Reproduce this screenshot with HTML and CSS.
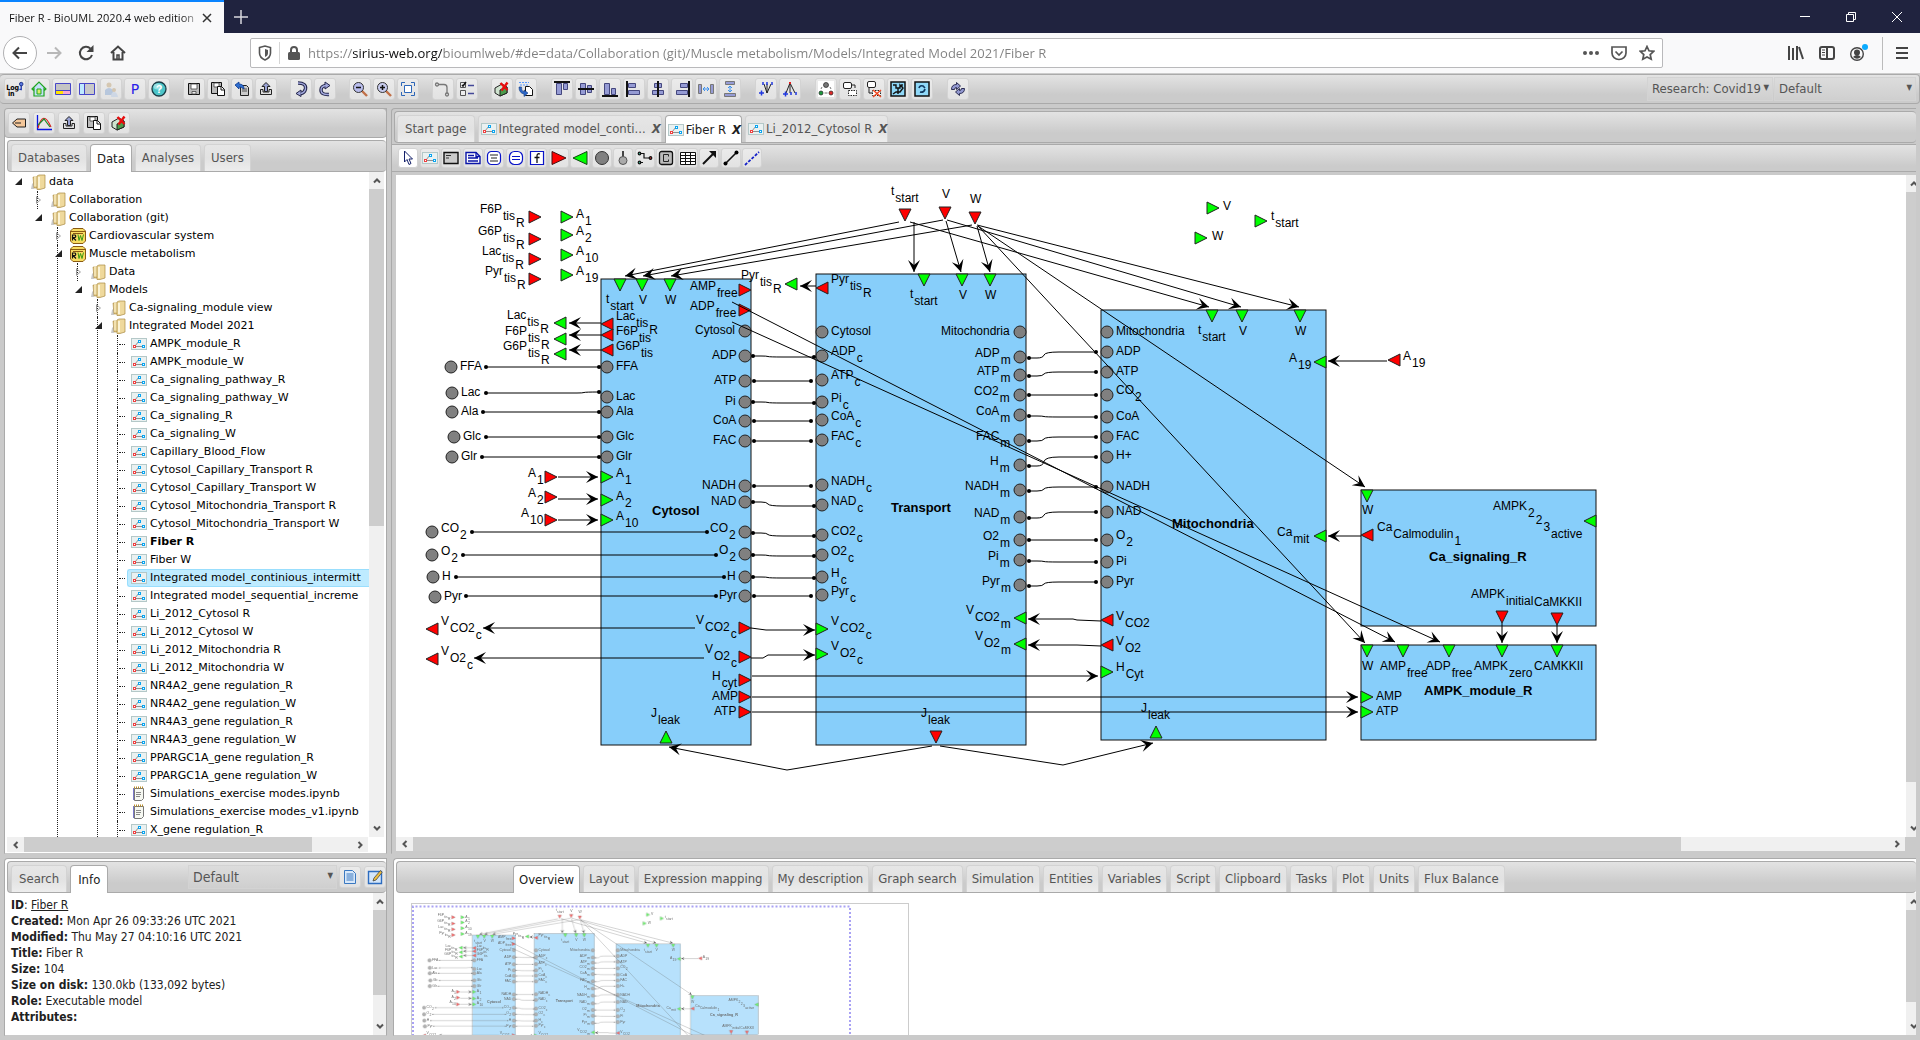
FILE: index.html
```html
<!DOCTYPE html>
<html lang="en">
<head>
<meta charset="utf-8">
<title>Fiber R - BioUML 2020.4 web edition</title>
<link rel="stylesheet" href="styles.css">
</head>
<body>
<svg class="defs" aria-hidden="true">
  <symbol id="i-folder" viewBox="0 0 16 16"><path d="M2 10l2-2v7H1z" fill="#c9c9c9"/><path d="M3 3h6v11H4z" fill="#dcc07a" stroke="#a98a44" stroke-width=".6"/><path d="M4 2.500h5v10H4z" fill="#f3e2b0"/><path d="M7 2l2-1h6v13l-5 1.500H7z" fill="#efd99c" stroke="#a98a44" stroke-width=".7"/><path d="M8 3h2v11H8z" fill="#fbf3d6"/></symbol>
  <symbol id="i-db" viewBox="0 0 16 16"><path d="M3 .5h10l2.500 2.500v10L13 15.500H3L.5 13V3z" fill="#f8dc62" stroke="#8a5a12"/><path d="M1 3.500h14M3 5.500h10" stroke="#8a5a12" fill="none"/><path d="M2.500 12.500V7H5q1.500 1 0 2.500H3l3 3" fill="none" stroke="#111" stroke-width="1.200"/><path d="M8 6.500l1 6 1.500-5 1.500 5 1.500-6" fill="none" stroke="#3a9a12"/></symbol>
  <symbol id="i-diag" viewBox="0 0 16 12"><rect x=".5" y=".5" width="15" height="11" fill="#eaf1f1" stroke="#b4c8c8"/><path d="M4 8L8 3M5 8.500h6" stroke="#777" stroke-width=".8" fill="none"/><rect x="2.500" y="7.500" width="2" height="2" fill="#fff" stroke="#f04040"/><rect x="7.500" y="2.500" width="2" height="2" fill="#fff" stroke="#0aa4f0"/><rect x="11.500" y="7.500" width="2" height="2" fill="#fff" stroke="#0aa4f0"/></symbol>
  <symbol id="i-note" viewBox="0 0 16 16"><path d="M3.500 2.500h9v10l-2 2h-7z" fill="#f6f8f2" stroke="#777"/><path d="M2.500 2v12" stroke="#7a78c8"/><path d="M3 1.500h10" stroke="#b98d28" stroke-width="2" stroke-dasharray="1 1"/><path d="M5 6.500h5M5 8.500h5M5 10.500h4" stroke="#888"/></symbol>
  <symbol id="i-save" viewBox="0 0 16 16"><path d="M2.500 2.500h11v11h-11z" fill="#bbb" stroke="#111"/><path d="M5 3h6v5H5z" fill="#fff" stroke="#444" stroke-width=".8"/><path d="M6 10.500h4V13H6z" fill="#eee" stroke="#444" stroke-width=".8"/></symbol>
  <symbol id="i-saveas" viewBox="0 0 16 16"><path d="M1.500 1.500h10v11h-10z" fill="#bbb" stroke="#111"/><path d="M4 2h5v4H4z" fill="#fff" stroke="#444" stroke-width=".8"/><path d="M7.500 5.500h4l3 3v6h-7z" fill="#fff" stroke="#111"/><path d="M11 5.500v3.500h3.500" fill="none" stroke="#111"/></symbol>
  <symbol id="i-export" viewBox="0 0 16 16"><path d="M8 1.500L4 5.500h2.500v5h3v-5H12z" fill="#9aa3d4" stroke="#222"/><path d="M2.500 8.500v5h11v-5H11v2.500H5V8.500z" fill="#ddd" stroke="#222"/></symbol>
  <symbol id="i-cube" viewBox="0 0 16 16"><path d="M1 7l7-4 5 3v6l-7 3-5-3z" fill="#cfe3cf" stroke="#222"/><path d="M6 9l7-3v6l-7 3z" fill="#4b9b4b" stroke="#222"/><path d="M6.500 2l7 7M13.500 1.500l-6 8" stroke="#e80c0c" stroke-width="2.400"/></symbol>
  <symbol id="up" viewBox="0 0 10 10"><path d="M2 6.500l3-3 3 3" fill="none" stroke="#555" stroke-width="2"/></symbol>
  <symbol id="down" viewBox="0 0 10 10"><path d="M2 3.500l3 3 3-3" fill="none" stroke="#555" stroke-width="2"/></symbol>
  <symbol id="left" viewBox="0 0 10 10"><path d="M6.500 2l-3 3 3 3" fill="none" stroke="#555" stroke-width="2"/></symbol>
  <symbol id="right" viewBox="0 0 10 10"><path d="M3.500 2l3 3-3 3" fill="none" stroke="#555" stroke-width="2"/></symbol>
</svg>

<header class="titlebar">
  <div class="browser-tab"><span class="browser-title">Fiber R - BioUML 2020.4 web edition</span><button class="plain" aria-label="Close tab"><svg width="12" height="12" viewBox="0 0 12 12"><path d="M2 2l8 8M10 2l-8 8" stroke="#333" stroke-width="1.500"/></svg></button></div>
  <button class="plain newtab" aria-label="New tab"><svg width="14" height="14" viewBox="0 0 14 14"><path d="M7 0v14M0 7h14" stroke="#d8d8de" stroke-width="1.500"/></svg></button>
  <div class="winbtns">
    <button class="plain" aria-label="Minimize"><svg width="10" height="10"><path d="M0 4.500h10" stroke="#fff"/></svg></button>
    <button class="plain" aria-label="Restore"><svg width="10" height="10" fill="none" stroke="#fff"><path d="M.5 2.500h7v7h-7zM2.500 2V.5h7v7H8"/></svg></button>
    <button class="plain" aria-label="Close"><svg width="10" height="10"><path d="M0 0l10 10M10 0L0 10" stroke="#fff"/></svg></button>
  </div>
</header>

<nav class="navbar">
  <button class="plain back" aria-label="Back"><svg width="16" height="14" viewBox="0 0 16 14" fill="none" stroke="#444" stroke-width="2"><path d="M15 7H2M7 1.500L1.500 7 7 12.500"/></svg></button>
  <button class="plain nav" aria-label="Forward"><svg width="16" height="14" viewBox="0 0 16 14" fill="none" stroke="#b8b8b8" stroke-width="2"><path d="M1 7h13M9 1.500L14.500 7 9 12.500"/></svg></button>
  <button class="plain nav" aria-label="Reload"><svg width="16" height="16" viewBox="0 0 16 16" fill="none" stroke="#444" stroke-width="2"><path d="M14 10A6.200 6.200 0 1 1 12.500 3.600"/><path d="M15.500 0v7h-7z" fill="#444" stroke="none"/></svg></button>
  <button class="plain nav" aria-label="Home"><svg width="16" height="16" viewBox="0 0 16 16" fill="none" stroke="#444" stroke-width="2"><path d="M1 8l7-6.500L15 8M3.500 7v7.500h9V7"/><path d="M7 14v-4h2v4" stroke-width="1.500"/></svg></button>
  <div class="urlbox">
    <svg class="shield" width="14" height="16" viewBox="0 0 14 16"><path d="M1.500 2.500L7 1l5.500 1.500V8c0 3-2 5.500-5.500 7C3.500 13.500 1.500 11 1.500 8z" fill="none" stroke="#555" stroke-width="1.600"/><path d="M7 4v8c2-1 3-2 3-4V5z" fill="#555"/></svg>
    <i class="sep"></i>
    <svg width="12" height="14" viewBox="0 0 12 14"><rect y="6" width="12" height="8" rx="1.500" fill="#555"/><path d="M3 6V4a3 3 0 0 1 6 0v2" fill="none" stroke="#555" stroke-width="2"/></svg>
    <input class="url" type="text" aria-label="Address" value="https://sirius-web.org/bioumlweb/#de=data/Collaboration (git)/Muscle metabolism/Models/Integrated Model 2021/Fiber R">
    <button class="plain" aria-label="Page actions"><svg width="16" height="4" fill="#555"><circle cx="2" cy="2" r="2"/><circle cx="8" cy="2" r="2"/><circle cx="14" cy="2" r="2"/></svg></button>
    <button class="plain" aria-label="Save to Pocket"><svg width="16" height="15" viewBox="0 0 16 15" fill="none" stroke="#555" stroke-width="1.700"><path d="M1 1h14v6a7 6.500 0 0 1-14 0z"/><path d="M4.500 5.500L8 9l3.500-3.500"/></svg></button>
    <button class="plain" aria-label="Bookmark"><svg width="16" height="16" viewBox="0 0 16 16" fill="none" stroke="#555" stroke-width="1.700"><path d="M8 1.500l2 4.300 4.700.5-3.500 3.200 1 4.700L8 11.900l-4.200 2.300 1-4.700L1.300 6.300l4.700-.5z"/></svg></button>
  </div>
  <div class="navright">
    <button class="plain" aria-label="Library"><svg width="16" height="14" viewBox="0 0 16 14" stroke="#444" stroke-width="2"><path d="M1 0v14M5 2v12M9 0v14M11 1l4 12" fill="none"/></svg></button>
    <button class="plain" aria-label="Sidebars"><svg width="16" height="14" viewBox="0 0 16 14" fill="none" stroke="#444" stroke-width="2"><rect x="1" y="1" width="14" height="12" rx="2"/><path d="M8 1v12"/><path d="M3 4h3M3 6.500h3M3 9h3" stroke-width="1"/></svg></button>
    <button class="plain" aria-label="Account"><svg width="20" height="20" viewBox="0 0 20 20"><circle cx="8" cy="11" r="6.300" fill="none" stroke="#444" stroke-width="1.400"/><circle cx="8" cy="9.500" r="3" fill="#444"/><path d="M4 14q4-4 8 0-4 3.500-8 0" fill="#444"/><circle cx="16" cy="4" r="3" fill="#0aabff"/></svg></button>
    <i class="sep tall"></i>
    <button class="plain" aria-label="Menu"><svg width="12" height="12" stroke="#444" stroke-width="2"><path d="M0 1h12M0 6h12M0 11h12"/></svg></button>
  </div>
</nav>

<div class="toolbar apptools">
  <div class="group">
    <button class="ib" aria-label="Log in"><svg viewBox="0 0 18 16"><text x="-1" y="9" class="tiny">Log</text><text x="1" y="16" class="tiny">in</text><path d="M16 3.500v6M14 8.500h2" stroke="#2038b0" stroke-width="1.500"/><circle cx="16" cy="2.500" r="2" fill="#5a78e0" stroke="#142a80"/></svg></button>
    <button class="ib" aria-label="Home"><svg viewBox="0 0 16 16"><path d="M1 8l7-7 7 7-1 1-1-1v7H3V8L2 9z" fill="#c5e0f8" stroke="#1fa51f" stroke-width="1.200"/><path d="M6 8h4v5H6z" fill="#d6f06a" stroke="#1fa51f"/></svg></button>
    <button class="ib" aria-label="Horizontal layout"><svg viewBox="0 0 16 16"><path d="M.5 2.500h15v11H.5z" fill="#c4c4c4" stroke="#4646c8"/><path d="M1 10h7v3H1z" fill="#ffe400"/><path d="M8 10h7v3H8z" fill="#f7a8d0"/><path d="M1 9.500h14" stroke="#4646c8"/></svg></button>
    <button class="ib" aria-label="Vertical layout"><svg viewBox="0 0 16 16"><path d="M.5 2.500h15v11H.5z" fill="#c9c9c9" stroke="#4646c8"/><path d="M1 3h4v10H1z" fill="#bfeaff"/><path d="M5.500 3v10" stroke="#4646c8"/></svg></button>
    <button class="ib" aria-label="Users"><svg viewBox="0 0 16 16" opacity=".6"><circle cx="6" cy="4" r="2.500" fill="#c9b28e"/><path d="M2 14V9q4-4 8 0v5z" fill="#9ab4d8"/><circle cx="11" cy="9" r="2" fill="#c9b28e"/><path d="M8 16q0-5 3-5t4 5z" fill="#c0d0e6"/></svg></button>
    <button class="ib letter" aria-label="Perspective">P</button>
    <button class="ib" aria-label="Help"><svg viewBox="0 0 16 16"><circle cx="8" cy="8" r="7" fill="#4cc4c8" stroke="#1a3c46" stroke-width="1.300"/><ellipse cx="6.500" cy="5.500" rx="4" ry="3" fill="#b8f0f0" opacity=".7"/><text x="8" y="12" text-anchor="middle" class="qm">?</text></svg></button>
  </div>
  <div class="group">
    <button class="ib" aria-label="Save"><svg><use href="#i-save"/></svg></button>
    <button class="ib" aria-label="Save as"><svg><use href="#i-saveas"/></svg></button>
    <button class="ib" aria-label="Import"><svg viewBox="0 0 16 16"><path d="M6.500 4.500h6l2 2v8h-8z" fill="#ccc" stroke="#222"/><path d="M8 8h5M8 10h5" stroke="#555"/><path d="M1 4l4-3v2q5 0 5 5-2-2-5-2v2z" fill="#2f6fd0" stroke="#0d3a90" stroke-width=".8"/></svg></button>
    <button class="ib" aria-label="Export"><svg><use href="#i-export"/></svg></button>
  </div>
  <div class="group">
    <button class="ib" aria-label="Undo"><svg viewBox="0 0 16 16"><path d="M5 2q8.500 0 7.500 6-1 4-5 4.500" fill="none" stroke="#22244a" stroke-width="3.400"/><path d="M8 9v6.500l-5-3z" fill="#a2a8dc" stroke="#22244a"/><path d="M5 2q8.500 0 7.500 6-1 4-5 4.500" fill="none" stroke="#a2a8dc" stroke-width="1.400"/></svg></button>
    <button class="ib" aria-label="Redo"><svg viewBox="0 0 16 16"><path d="M12 13.500q-8 .5-8-4.500 0-4 5-4.500" fill="none" stroke="#22244a" stroke-width="3.400"/><path d="M8 1v7l5-3.500z" fill="#a2a8dc" stroke="#22244a"/><path d="M12 13.500q-8 .5-8-4.500 0-4 5-4.500" fill="none" stroke="#a2a8dc" stroke-width="1.400"/></svg></button>
  </div>
  <div class="group">
    <button class="ib" aria-label="Zoom out"><svg viewBox="0 0 16 16"><path d="M10 10l5 5" stroke="#c07048" stroke-width="2.400"/><circle cx="6.500" cy="6.500" r="5" fill="#b8bcec" stroke="#333"/><path d="M4 6.500h5" stroke="#111" stroke-width="1.500"/></svg></button>
    <button class="ib" aria-label="Zoom in"><svg viewBox="0 0 16 16"><path d="M10 10l5 5" stroke="#c07048" stroke-width="2.400"/><circle cx="6.500" cy="6.500" r="5" fill="#c8ccee" stroke="#333"/><path d="M4 6.500h5M6.500 4v5" stroke="#111" stroke-width="1.500"/></svg></button>
    <button class="ib" aria-label="Fit to screen"><svg viewBox="0 0 16 16" fill="none" stroke="#2c66b8"><path d="M4.500 4.500h7v7h-7z" fill="#fff"/><path d="M1.500 5V1.500H5M11 1.500h3.500V5M14.500 11v3.500H11M5 14.500H1.500V11"/></svg></button>
  </div>
  <div class="group">
    <button class="ib" aria-label="Connector"><svg viewBox="0 0 16 16" fill="none" stroke="#777" stroke-width="1.300"><path d="M3 3.500h6q3 0 3 3V12"/><circle cx="2" cy="3.500" r="1.500"/><circle cx="12" cy="13.500" r="1.500"/></svg></button>
    <button class="ib" aria-label="Options"><svg viewBox="0 0 16 16" fill="#eee" stroke="#555"><path d="M1.500 1.500h5v5h-5zM1.500 9.500h5v5h-5z"/><path d="M3 4l1 1 3-4" stroke="#111" fill="none" stroke-width="1.500"/><path d="M9 4.500h6M9 12.500h6" stroke="#444898" stroke-width="1.500"/></svg></button>
  </div>
  <div class="group">
    <button class="ib" aria-label="Remove"><svg><use href="#i-cube"/></svg></button>
    <button class="ib" aria-label="Paste"><svg viewBox="0 0 16 16"><path d="M1 1.500h10M2 4h8" stroke="#5a9aff" stroke-dasharray="2 1"/><path d="M7.500 5.500h4l3 3v6h-7z" fill="#fff" stroke="#111"/><path d="M1 6q0 6 5 7v2.500L10 12 6 9v2Q3 10 3.500 6z" fill="#2b66c8" stroke="#123a80" stroke-width=".6"/></svg></button>
  </div>
  <div class="group wide">
    <button class="ib" aria-label="Align top"><svg viewBox="0 0 16 16" fill="#959bd4" stroke="#44477e"><path d="M2.500 2.500h5v11h-5zM9.500 2.500h4v6h-4z"/><path d="M0 1h16" stroke="#111" stroke-width="2"/></svg></button>
    <button class="ib" aria-label="Align middle"><svg viewBox="0 0 16 16" fill="#959bd4" stroke="#44477e"><path d="M2.500 2.500h5v11h-5zM9.500 4.500h4v7h-4z"/><path d="M0 8h16" stroke="#111" stroke-width="2"/></svg></button>
    <button class="ib" aria-label="Align bottom"><svg viewBox="0 0 16 16" fill="#959bd4" stroke="#44477e"><path d="M2.500 2.500h5v11h-5zM9.500 7.500h4v6h-4z"/><path d="M0 15h16" stroke="#111" stroke-width="2"/></svg></button>
    <button class="ib" aria-label="Align left"><svg viewBox="0 0 16 16" fill="#959bd4" stroke="#44477e"><path d="M2.500 2.500h7v4h-7zM2.500 9.500h11v4h-11z"/><path d="M1 0v16" stroke="#111" stroke-width="2"/></svg></button>
    <button class="ib" aria-label="Align center"><svg viewBox="0 0 16 16" fill="#959bd4" stroke="#44477e"><path d="M4.500 2.500h7v4h-7zM2.500 9.500h11v4h-11z"/><path d="M8 0v16" stroke="#111" stroke-width="2"/></svg></button>
    <button class="ib" aria-label="Align right"><svg viewBox="0 0 16 16" fill="#959bd4" stroke="#44477e"><path d="M6.500 2.500h7v4h-7zM2.500 9.500h11v4h-11z"/><path d="M15 0v16" stroke="#111" stroke-width="2"/></svg></button>
    <button class="ib" aria-label="Distribute horizontally"><svg viewBox="0 0 16 16" fill="#959bd4" stroke="#777"><path d="M.5 3.500h3v9h-3zM12.500 3.500h3v9h-3z"/><path d="M5 8h6M7 6L5 8l2 2M9 6l2 2-2 2" fill="none" stroke="#3a90f0"/></svg></button>
    <button class="ib" aria-label="Distribute vertically"><svg viewBox="0 0 16 16" fill="#959bd4" stroke="#777"><path d="M3.500 .5h9v3h-9zM2.500 12.500h11v3h-11z"/><path d="M8 5v6M6 7l2-2 2 2M6 9l2 2 2-2" fill="none" stroke="#3a90f0"/></svg></button>
  </div>
  <div class="group wide">
    <button class="ib" aria-label="Expand"><svg viewBox="0 0 16 16" fill="none" stroke="#222"><path d="M9 12L6 3M9 12V3M9 12l4-9"/><path d="M5 1v3M9 1v3M14 1v3M1 12h5M3.500 9.500v5" stroke="#2038e0" stroke-width="1.500"/></svg></button>
    <button class="ib" aria-label="Collapse"><svg viewBox="0 0 16 16" fill="none" stroke="#222"><path d="M8 2L4 12M8 2v10M8 2l5 10"/><path d="M8 1v2" stroke="#e02020" stroke-width="2"/><path d="M9 11v3M14 11v3M1 13h5M3.500 10.500v5" stroke="#2038e0" stroke-width="1.500"/></svg></button>
  </div>
  <div class="group wide">
    <button class="ib" aria-label="Reaction"><svg viewBox="0 0 16 16"><path d="M0 0h16v16H0z" fill="#fff"/><circle cx="8" cy="4" r="2.500" fill="#777" stroke="#222" stroke-width=".7"/><circle cx="3" cy="12" r="2" fill="#1a9a3c" stroke="#222" stroke-width=".7"/><circle cx="13" cy="12" r="2" fill="#e02828" stroke="#222" stroke-width=".7"/><path d="M3 8l1-2M13 8l-1-2M6.500 12h3" stroke="#777"/></svg></button>
    <button class="ib" aria-label="Add clone"><svg viewBox="0 0 16 16" fill="#fff" stroke="#222"><rect x="1.500" y="1.500" width="8" height="6" rx="1.500"/><path d="M10 4h3v3" fill="none"/><path d="M6.500 9.500h8v5h-8z" stroke-dasharray="1.500 1"/></svg></button>
    <button class="ib" aria-label="Remove clone"><svg viewBox="0 0 16 16" fill="#fff" stroke="#222"><rect x="1.500" y=".5" width="8" height="6" rx="1.500"/><path d="M3 7v5h3" fill="none"/><path d="M6.500 9.500h8v5h-8z" stroke-dasharray="1.500 1"/><path d="M7 9l8 7M15 9l-8 7" stroke="#f04820" stroke-width="1.500"/></svg></button>
    <button class="ib" aria-label="Layout graph"><svg viewBox="0 0 16 16"><path d="M1 1h14v14H1z" fill="#8fd8f8" stroke="#111" stroke-width="1.500"/><path d="M3 4h3v3h4V4l3 3-3 4H6l-3 2M8 7v6M12 3v3" fill="none" stroke="#111" stroke-width="1.400"/></svg></button>
    <button class="ib" aria-label="Refresh layout"><svg viewBox="0 0 16 16"><path d="M1 1h14v14H1z" fill="#8fd8f8" stroke="#111" stroke-width="1.500"/><path d="M5 7q1-3 4-2l2 2M11 8q-1 4-5 3" fill="none" stroke="#123a60" stroke-width="1.700"/></svg></button>
  </div>
  <div class="group wide">
    <button class="ib" aria-label="Refresh"><svg viewBox="0 0 16 16" fill="#9298d0" stroke="#2c2e54"><path d="M1.500 8.500q0-5 5-5V1.500l4 3.500-4 3.500v-2q-2 0-2 2z"/><path d="M14.500 7.500q0 5-5 5v2l-4-3.500 4-3.500v2q2 0 2-2z"/></svg></button>
  </div>
  <div class="picks">
    <label class="pick p1"><select aria-label="Perspective group"><option>Research: Covid19</option></select></label>
    <label class="pick p2"><select aria-label="Perspective"><option>Default</option></select></label>
  </div>
</div>

<main class="workspace">
  <section class="col left">
    <div class="pane treepane">
      <div class="toolbar lefttools">
        <button class="ib" aria-label="Open"><svg viewBox="0 0 16 16"><path d="M1.500 8L6 4h8.500v8H6z" fill="#f4c79a" stroke="#222"/><path d="M4 8h6" stroke="#222"/></svg></button>
        <button class="ib" aria-label="Plot"><svg viewBox="0 0 16 16" fill="none"><path d="M1.500 0v14.500H16" stroke="#0a16e0" stroke-width="1.300"/><path d="M2 13Q7-6 15 12" stroke="#e02020" stroke-width="1.200"/><path d="M2 10L8 4l6 8" stroke="#1c8a2c" stroke-width="1.200"/></svg></button>
        <button class="ib" aria-label="Export"><svg><use href="#i-export"/></svg></button>
        <button class="ib" aria-label="Copy"><svg><use href="#i-saveas"/></svg></button>
        <button class="ib" aria-label="Remove"><svg><use href="#i-cube"/></svg></button>
      </div>
      <div class="tabbar repo"><button class="tab">Databases</button><button class="tab on">Data</button><button class="tab">Analyses</button><button class="tab">Users</button></div>
      <div class="scrollrow">
        <ul class="tree">
          <li class="last"><div class="row"><i class="tw open"></i><svg><use href="#i-folder"/></svg>data</div>
            <ul>
              <li><div class="row"><i class="tw"></i><svg><use href="#i-folder"/></svg>Collaboration</div></li>
              <li class="last"><div class="row"><i class="tw open"></i><svg><use href="#i-folder"/></svg>Collaboration (git)</div>
                <ul>
                  <li><div class="row"><i class="tw"></i><svg><use href="#i-db"/></svg>Cardiovascular system</div></li>
                  <li><div class="row"><i class="tw open"></i><svg><use href="#i-db"/></svg>Muscle metabolism</div>
                    <ul>
                      <li><div class="row"><i class="tw"></i><svg><use href="#i-folder"/></svg>Data</div></li>
                      <li class="last"><div class="row"><i class="tw open"></i><svg><use href="#i-folder"/></svg>Models</div>
                        <ul>
                          <li><div class="row"><i class="tw"></i><svg><use href="#i-folder"/></svg>Ca-signaling_module view</div></li>
                          <li><div class="row"><i class="tw open"></i><svg><use href="#i-folder"/></svg>Integrated Model 2021</div>
                            <ul class="leaves">
                              <li><div class="row"><svg><use href="#i-diag"/></svg>AMPK_module_R</div></li>
                              <li><div class="row"><svg><use href="#i-diag"/></svg>AMPK_module_W</div></li>
                              <li><div class="row"><svg><use href="#i-diag"/></svg>Ca_signaling_pathway_R</div></li>
                              <li><div class="row"><svg><use href="#i-diag"/></svg>Ca_signaling_pathway_W</div></li>
                              <li><div class="row"><svg><use href="#i-diag"/></svg>Ca_signaling_R</div></li>
                              <li><div class="row"><svg><use href="#i-diag"/></svg>Ca_signaling_W</div></li>
                              <li><div class="row"><svg><use href="#i-diag"/></svg>Capillary_Blood_Flow</div></li>
                              <li><div class="row"><svg><use href="#i-diag"/></svg>Cytosol_Capillary_Transport R</div></li>
                              <li><div class="row"><svg><use href="#i-diag"/></svg>Cytosol_Capillary_Transport W</div></li>
                              <li><div class="row"><svg><use href="#i-diag"/></svg>Cytosol_Mitochondria_Transport R</div></li>
                              <li><div class="row"><svg><use href="#i-diag"/></svg>Cytosol_Mitochondria_Transport W</div></li>
                              <li><div class="row"><svg><use href="#i-diag"/></svg><b>Fiber R</b></div></li>
                              <li><div class="row"><svg><use href="#i-diag"/></svg>Fiber W</div></li>
                              <li><div class="row sel"><svg><use href="#i-diag"/></svg>Integrated model_continious_intermitt</div></li>
                              <li><div class="row"><svg><use href="#i-diag"/></svg>Integrated model_sequential_increme</div></li>
                              <li><div class="row"><svg><use href="#i-diag"/></svg>Li_2012_Cytosol R</div></li>
                              <li><div class="row"><svg><use href="#i-diag"/></svg>Li_2012_Cytosol W</div></li>
                              <li><div class="row"><svg><use href="#i-diag"/></svg>Li_2012_Mitochondria R</div></li>
                              <li><div class="row"><svg><use href="#i-diag"/></svg>Li_2012_Mitochondria W</div></li>
                              <li><div class="row"><svg><use href="#i-diag"/></svg>NR4A2_gene regulation_R</div></li>
                              <li><div class="row"><svg><use href="#i-diag"/></svg>NR4A2_gene regulation_W</div></li>
                              <li><div class="row"><svg><use href="#i-diag"/></svg>NR4A3_gene regulation_R</div></li>
                              <li><div class="row"><svg><use href="#i-diag"/></svg>NR4A3_gene regulation_W</div></li>
                              <li><div class="row"><svg><use href="#i-diag"/></svg>PPARGC1A_gene regulation_R</div></li>
                              <li><div class="row"><svg><use href="#i-diag"/></svg>PPARGC1A_gene regulation_W</div></li>
                              <li><div class="row"><svg><use href="#i-note"/></svg>Simulations_exercise modes.ipynb</div></li>
                              <li><div class="row"><svg><use href="#i-note"/></svg>Simulations_exercise modes_v1.ipynb</div></li>
                              <li><div class="row"><svg><use href="#i-diag"/></svg>X_gene regulation_R</div></li>
                            </ul>
                          </li>
                        </ul>
                      </li>
                    </ul>
                  </li>
                </ul>
              </li>
            </ul>
          </li>
        </ul>
        <div class="vbar"><svg><use href="#up"/></svg><i class="thumb t-tree"></i><svg><use href="#down"/></svg></div>
      </div>
      <div class="hbar h-tree"><svg><use href="#left"/></svg><i class="thumb"></i><svg><use href="#right"/></svg></div>
    </div>

    <div class="pane bottom">
      <div class="tabbar infobar">
        <button class="tab">Search</button><button class="tab on">Info</button>
        <label class="pick p3"><select aria-label="Template"><option>Default</option></select></label>
        <button class="ib" aria-label="View"><svg viewBox="0 0 16 16"><path d="M2.500 1.500h8l3 3v10h-11z" fill="#d8e8fa" stroke="#3a78c0"/><path d="M4.500 5h7M4.500 7h7M4.500 9h7M4.500 11h7" stroke="#3a78c0"/></svg></button>
        <button class="ib" aria-label="Edit"><svg viewBox="0 0 16 16"><path d="M1.500 2.500h13v12h-13z" fill="#d4e6fa" stroke="#2c6cc0" stroke-width="1.400"/><path d="M13.500 1.500L7 9l-1 3 3-1 6-7.500z" fill="#f0c040" stroke="#444" stroke-width=".8"/></svg></button>
      </div>
      <div class="scrollrow">
        <div class="info">
          <div><b>ID</b>: <a href="#fiber-r">Fiber R</a></div>
          <div><b>Created:</b> Mon Apr 26 09:33:26 UTC 2021</div>
          <div><b>Modified:</b> Thu May 27 04:10:16 UTC 2021</div>
          <div><b>Title:</b> Fiber R</div>
          <div><b>Size:</b> 104</div>
          <div><b>Size on disk:</b> 130.0kb (133,092 bytes)</div>
          <div><b>Role:</b> Executable model</div>
          <div><b>Attributes:</b></div>
        </div>
        <div class="vbar v-info"><svg><use href="#up"/></svg><i class="thumb t-info"></i><svg><use href="#down"/></svg></div>
      </div>
    </div>
  </section>

  <section class="col right">
    <div class="pane docpane">
      <div class="tabbar docs">
        <button class="tab">Start page</button>
        <button class="tab doc"><svg><use href="#i-diag"/></svg>Integrated model_conti... <i class="x">X</i></button>
        <button class="tab doc on"><svg><use href="#i-diag"/></svg>Fiber R <i class="x">X</i></button>
        <button class="tab doc"><svg><use href="#i-diag"/></svg>Li_2012_Cytosol R <i class="x">X</i></button>
      </div>
      <div class="toolbar edtools"><div class="palette">
        <button class="ib on" aria-label="Select"><svg viewBox="0 0 16 16"><path d="M4.500 1v11l2.500-2.500 2 5 2-1-2-4.500h3.500z" fill="#fff" stroke="#14206a"/></svg></button>
        <button class="ib" aria-label="Diagram"><svg><use href="#i-diag"/></svg></button>
        <button class="ib" aria-label="Block"><svg viewBox="0 0 16 16"><path d="M1 2.500h14v11H1z" fill="#ccc" stroke="#111" stroke-width="1.400"/><path d="M3 5.500h5M3 8h3" stroke="#333"/></svg></button>
        <button class="ib" aria-label="Note"><svg viewBox="0 0 16 16"><path d="M1 2.500h10l4 4v7H1z" fill="#fff" stroke="#0a14a8" stroke-width="1.400"/><path d="M11 2v4.500h4M3 5.500h6M3 8h10M3 11h10" stroke="#0a14a8" stroke-width="1.300" fill="none"/></svg></button>
        <button class="ib" aria-label="Equation block"><svg viewBox="0 0 16 16" fill="#fff" stroke="#0a14c8" stroke-width="1.200"><rect x="1.500" y="1.500" width="13" height="13" rx="4"/><path d="M4 5h8M5 8h6M4 11h8" stroke="#222"/></svg></button>
        <button class="ib" aria-label="Equation"><svg viewBox="0 0 16 16" fill="#fff" stroke="#0a14c8" stroke-width="1.200"><rect x="1.500" y="1.500" width="13" height="13" rx="5"/><path d="M4 6.500h8M4 9.500h8"/></svg></button>
        <button class="ib" aria-label="Function"><svg viewBox="0 0 16 16"><path d="M1.500 1.500h13v13h-13z" fill="#fff" stroke="#0a14c8" stroke-width="1.200"/><path d="M11 4Q8 3 8 6v7M5.500 7.500h5" fill="none" stroke="#111" stroke-width="1.300"/></svg></button>
        <button class="ib" aria-label="Output port"><svg viewBox="0 0 16 16"><path d="M1 1.500v13L15 8z" fill="#f00" stroke="#411"/></svg></button>
        <button class="ib" aria-label="Input port"><svg viewBox="0 0 16 16"><path d="M15 1.500v13L1 8z" fill="#0f0" stroke="#141"/></svg></button>
        <button class="ib" aria-label="Contact"><svg viewBox="0 0 16 16"><circle cx="8" cy="8" r="6.500" fill="#808080" stroke="#333"/></svg></button>
        <button class="ib" aria-label="Bus"><svg viewBox="0 0 16 16"><path d="M8 1v6" stroke="#444" stroke-width="2"/><circle cx="8" cy="10.500" r="4" fill="#aaa" stroke="#555"/></svg></button>
        <button class="ib" aria-label="Switch"><svg viewBox="0 0 16 16" fill="none" stroke="#111" stroke-width="1.200"><path d="M2 3.500h5v4.500h6M3 12.500h3"/><circle cx="2.500" cy="3.500" r="1.300" fill="#3a8"/><circle cx="2.500" cy="12.500" r="1.300" fill="#3a8"/><circle cx="13.500" cy="8" r="1.300" fill="#c33"/></svg></button>
        <button class="ib" aria-label="Constant"><svg viewBox="0 0 16 16"><rect x="1.500" y="1.500" width="13" height="13" rx="2" fill="#bbb" stroke="#111" stroke-width="1.300"/><path d="M5.500 4.500h5M5.500 4.500v7h5M10.500 4.500v2M10.500 9.500v2" fill="none" stroke="#222"/></svg></button>
        <button class="ib" aria-label="Table"><svg viewBox="0 0 16 16"><path d="M.5 2.500h15v12H.5z" fill="#fff" stroke="#111"/><path d="M0 5.500h16M0 8.500h16M0 11.500h16M5.500 3v12M10.500 3v12" stroke="#111"/></svg></button>
        <button class="ib" aria-label="Directed link"><svg viewBox="0 0 16 16"><path d="M2 14L12 4" stroke="#111" stroke-width="2"/><path d="M15 1v7L8 1z" fill="#111"/></svg></button>
        <button class="ib" aria-label="Undirected link"><svg viewBox="0 0 16 16"><path d="M2 14L14 2" stroke="#111" stroke-width="1.600"/><circle cx="2.500" cy="13.500" r="2"/><circle cx="13.500" cy="2.500" r="2"/></svg></button>
        <button class="ib" aria-label="Note link"><svg viewBox="0 0 16 16"><path d="M1 15L15 2" stroke="#1420c8" stroke-width="1.800" stroke-dasharray="3 1.500"/></svg></button>
      </div></div>
      <div class="scrollrow canvasrow">
        <div class="canvas"><svg class="sheet" width="1510" height="662" viewBox="396 175 1510 662"><g id="diagram"></g></svg></div>
        <div class="vbar v-wide"><svg><use href="#up"/></svg><i class="thumb t-canvas"></i><svg><use href="#down"/></svg></div>
      </div>
      <div class="hbar h-canvas"><svg><use href="#left"/></svg><i class="thumb"></i><svg><use href="#right"/></svg></div>
    </div>

    <div class="pane bottom">
      <div class="tabbar views">
        <button class="tab on">Overview</button><button class="tab">Layout</button><button class="tab">Expression mapping</button><button class="tab">My description</button><button class="tab">Graph search</button><button class="tab">Simulation</button><button class="tab">Entities</button><button class="tab">Variables</button><button class="tab">Script</button><button class="tab">Clipboard</button><button class="tab">Tasks</button><button class="tab">Plot</button><button class="tab">Units</button><button class="tab">Flux Balance</button>
      </div>
      <div class="scrollrow">
        <div class="overview"><div class="frame"><svg class="mini" width="495" height="180"><use href="#diagram" transform="translate(-112 -49) scale(.287)" opacity=".6"/><path d="M1 180V2.500H438V180" fill="none" stroke="#a9a2f4" stroke-width="2" stroke-dasharray="2 2"/></svg></div></div>
        <div class="vbar v-wide"><svg><use href="#up"/></svg><i class="thumb t-over"></i><svg><use href="#down"/></svg></div>
      </div>
    </div>
  </section>
</main>
<script src="diagram.js"></script>
</body>
</html>
```

FILE: styles.css
```css
* { box-sizing: border-box; }
html, body { height: 100%; }
body {
  margin: 0;
  display: flex;
  flex-direction: column;
  overflow: hidden;
  background: #cacaca;
  color: #111;
  font: 13px/16px "DejaVu Sans Condensed", "DejaVu Sans", sans-serif;
}
button, select, input { font: inherit; color: inherit; }
.defs { position: absolute; width: 0; height: 0; }
.plain { border: 0; padding: 0; background: none; display: flex; align-items: center; justify-content: center; }

/* browser window */
.titlebar { height: 33px; flex: none; display: flex; align-items: center; background: #20233f; }
.browser-tab {
  width: 224px; height: 33px; display: flex; align-items: center; gap: 3px;
  padding-left: 9px; border-top: 2px solid #0a84ff; background: #f9f9fa;
  font: 11px/16px "Open Sans", "Noto Sans", sans-serif;
}
.browser-title {
  width: 189px; overflow: hidden; white-space: nowrap;
  -webkit-mask-image: linear-gradient(to right, #000 172px, transparent 194px);
  mask-image: linear-gradient(to right, #000 172px, transparent 194px);
}
.newtab { width: 34px; }
.winbtns { margin-left: auto; display: flex; }
.winbtns .plain { width: 46px; height: 30px; }
.navbar { height: 41px; flex: none; display: flex; align-items: center; background: #f9f9fa; border-bottom: 1px solid #ccc; }
.back { width: 34px; height: 34px; margin: 0 1px 0 3px; border: 1px solid #b1b1b3; border-radius: 17px; background: #fff; }
.nav { width: 32px; height: 32px; }
.urlbox {
  width: 1413px; height: 30px; margin-left: 116px; padding: 0 7px 0 7px;
  display: flex; align-items: center; flex: 0 1 auto; gap: 12px;
  background: #fff; border: 1px solid #b9b9bb; border-radius: 2px;
}
.sep { width: 1px; height: 22px; background: #d5d5d5; flex: none; margin: 0 -4px 0 -5px; }
.sep.tall { height: 33px; background: #bbb; margin: 0; }
.url {
  flex: 1; min-width: 0; margin-left: -4px; padding: 0; border: 0; outline: 0;
  font: 13px/20px "Open Sans", "Noto Sans", sans-serif;
  color: transparent;
  background: linear-gradient(to right, #808080 45px, #0c0c0d 45px, #0c0c0d 134px, #808080 134px);
  -webkit-background-clip: text; background-clip: text;
}
.navright { margin-left: auto; padding-right: 12px; display: flex; align-items: center; gap: 13px; }
.navright .plain:first-child, .navright .plain:nth-child(2) { width: 18px; }

/* bars and icon buttons */
.toolbar, .tabbar {
  display: flex; align-items: center;
  border: 1px solid #aaa; border-radius: 4px;
  background: linear-gradient(#e3e3e3, #cbcbcb 70%);
}
.apptools { height: 30px; flex: none; padding-left: 4px; gap: 13px; border-left: 0; }
.group { display: flex; gap: 2px; }
.group.wide { margin-left: 1px; }
.ib {
  width: 22px; height: 22px; padding: 0; flex: none;
  display: flex; align-items: center; justify-content: center;
  border: 1px solid #d3d3d3; border-radius: 3px;
  background: linear-gradient(#ebebeb, #e2e2e2);
}
.ib.on { background: #fff; }
.ib svg { width: 16px; height: 16px; overflow: visible; flex: none; }
.letter { color: #2a20e8; font: 14px/16px "DejaVu Sans", sans-serif; }
.tiny { font: bold 8px "DejaVu Sans Condensed", "DejaVu Sans", sans-serif; }
.qm { font: bold 11px "Liberation Sans", sans-serif; fill: #fff; }
.picks { margin-left: auto; display: flex; gap: 1px; padding-right: 3px; }
.pick { position: relative; height: 24px; border: 1px solid #d3d3d3; background: linear-gradient(#dcdcdc, #cfcfcf); color: #555; }
.pick select { appearance: none; width: 100%; height: 22px; padding: 0 4px; border: 0; background: none; }
.pick::after { content: "▼"; position: absolute; right: 3px; top: 2px; font-size: 8px; }
.p1 { width: 126px; }
.p2 { width: 142px; }
.p3 { width: 149px; margin-left: auto; font-size: 14px; }

/* workspace */
.workspace { flex: 1; min-height: 0; display: flex; gap: 4px; padding: 4px; }
.col { display: flex; flex-direction: column; gap: 4px; min-height: 0; }
.left { width: 383px; flex: none; }
.right { flex: 1; min-width: 0; }
.pane { display: flex; flex-direction: column; min-height: 0; overflow: hidden; background: #fff; border: 1px solid #aaa; border-bottom-color: #cacaca; border-radius: 4px 0 0 0; }
.treepane, .docpane { flex: 1; }
.docpane { border-right: 0; background: #cacaca; }
.bottom { height: 178px; flex: none; padding-top: 2px; }
.right .bottom { border-right: 0; margin-left: 2px; }
.lefttools { height: 30px; flex: none; gap: 3px; padding-left: 3px; margin: -1px -1px 2px; }
.tabbar { height: 32px; flex: none; gap: 3px; padding: 0 3px; align-items: flex-end; margin-left: 2px; border-right: 0; }
.tab {
  height: 27px; padding: 0 6px; flex: none;
  display: flex; align-items: center; white-space: nowrap; color: #555;
  border: 1px solid #d3d3d3; border-bottom: 0; border-radius: 4px 4px 0 0;
  background: linear-gradient(#e6e6e6, #e2e2e2 50%, #ededed);
}
.tab.on { height: 28px; margin-bottom: -1px; background: #fff; border-color: #aaa; color: #212121; }
.infobar { padding-right: 0; }
.infobar .pick, .infobar .ib { align-self: center; }
.infobar .tab { padding: 0 7px; }
.infobar .pick { margin-right: -1px; }
.scrollrow { flex: 1; min-height: 0; display: flex; overflow: hidden; }

/* scroll bars */
.vbar { width: 15px; flex: none; display: flex; flex-direction: column; background: #f0f0f0; margin-right: 2px; }
.vbar svg, .hbar svg { width: 10px; height: 10px; flex: none; margin: auto 3px 4px; }
.vbar svg:first-child { margin: 4px 3px 3px; }
.v-info { width: 13px; margin-right: 0; }
.v-info svg { margin-left: 2px; }
.v-info svg:first-child { margin-left: 2px; }
.v-wide { width: 10px; margin-right: 0; overflow: hidden; }
.thumb { background: #cdcdcd; }
.t-tree { flex: 0 0 337px; }
.t-info { flex: 0 0 85px; }
.t-canvas { flex: 0 0 590px; }
.t-over { flex: 0 0 92px; }
.hbar { height: 15px; flex: none; display: flex; align-items: center; background: #f0f0f0; }
.hbar svg { margin: 0 3px 0 4px; }
.hbar svg:last-child { margin-left: auto; }
.h-tree { margin: 0 18px 1px 2px; }
.h-tree .thumb { width: 288px; height: 15px; }
.h-canvas { margin: 0 11px 2px 4px; height: 14px; }
.h-canvas .thumb { width: 1268px; height: 14px; }

/* tree */
.tree { flex: 1; min-width: 0; overflow: hidden; margin: 0; padding: 1px 0 0 12px; font: 11px/18px "DejaVu Sans", sans-serif; color: #000; }
.tree ul, .tree { list-style: none; }
.tree ul { margin: 0; padding-left: 19px; }
.tree li { border-left: 1px dotted #222; }
.tree li.last { border-left-color: transparent; }
.row { display: flex; align-items: center; height: 18px; white-space: nowrap; }
.row svg { width: 16px; height: 16px; flex: none; margin-right: 3px; }
.tw { width: 12px; height: 8px; flex: none; }
.tw::before { content: ""; display: block; width: 5px; height: 8px; margin-left: -2px; background: #999; clip-path: polygon(0 0, 100% 50%, 0 100%, 0 0, 1px 2px, 1px 6px, 4px 50%, 1px 2px); }
.tw.open::before { width: 7px; height: 7px; margin-left: -3px; background: #222; clip-path: polygon(100% 0, 100% 100%, 0 100%); }
.leaves .row { padding-left: 3px; margin-left: 9px; border: 1px solid transparent; border-right: 0; position: relative; }
.leaves .row::before { content: ""; position: absolute; left: -9px; top: 8px; width: 6px; border-top: 1px dotted #222; }
.leaves .sel { background: #beebff; border-color: #99defd; border-radius: 3px 0 0 3px; }

.info { flex: 1; padding: 4px 6px; color: #212121; font-size: 12px; }
.info a { color: inherit; }

/* documents */
.docs { margin: 2px 0 1px 2px; padding-left: 2px; }
.docs .tab { padding: 0 7px; }
.docs .doc { padding: 0 0 0 2px; }
.doc svg { width: 16px; height: 12px; margin-right: 2px; }
.x { font-weight: bold; margin-left: 6px; }
.edtools { height: 31px; flex: none; border-radius: 0; border-width: 1px 0 0; padding: 0 0 5px 8px; box-shadow: inset 0 -3px #cacaca, inset 0 -4px #aaa; }
.palette { display: flex; justify-content: space-between; width: 364px; margin-left: -2px; }
.palette .ib { width: 20px; height: 20px; }
.canvas { flex: 1; min-width: 0; overflow: hidden; border-left: 4px solid #cacaca; background: #fff; }
.sheet { display: block; }
.node-label { font: 12px "Liberation Sans", Arial, sans-serif; }
.node-title { font: bold 13px "Liberation Sans", Arial, sans-serif; }

.views { padding-left: 116px; }
.views .tab { padding: 0 5px; }
.overview { flex: 1; min-width: 0; overflow: hidden; padding: 10px 0 0 17px; }
.frame { width: 498px; height: 200px; border: 1px solid #ccc; }
.mini { display: block; }
```

FILE: diagram.js
```js
// Compartments: x, y, width, height
const boxes = [
  [601, 279, 150, 466], [816, 274, 210, 471], [1101, 310, 225, 430],
  [1361, 490, 235, 136], [1361, 645, 235, 95]
];

const titles = [
  [652, 515, 'Cytosol'], [891, 512, 'Transport'], [1172, 528, 'Mitochondria'],
  [1429, 561, 'Ca_signaling_R'], [1424, 695, 'AMPK_module_R']
];

// Contact ports: centre of the circle
const contacts = {
  451: [367], 452: [393, 412, 457], 454: [437], 432: [532, 555], 433: [577], 435: [597],
  607: [367, 397, 412, 437, 457],
  745: [331, 356, 381, 402, 421, 441, 486, 502, 532, 554, 577, 596],
  822: [332, 356, 380, 402, 420, 440, 485, 505, 535, 555, 577, 595],
  1020: [332, 357, 375, 395, 415, 440, 465, 490, 517, 540, 560, 585],
  1107: [332, 352, 372, 395, 417, 437, 457, 487, 512, 540, 562, 582]
};

// Signal ports: direction, colour, centre x, centre y
const ports = `
r R 535 217,r R 535 239,r R 535 259,r R 535 279,r G 567 217,r G 567 235,r G 567 255,r G 567 275,
d G 620 285,d G 642 285,d G 670 285,r R 745 290,r R 745 310,l G 560 323,l G 560 339,l G 560 354,
l R 607 324,l R 607 335,l R 607 350,r R 551 477,r R 551 497,r R 551 520,r G 607 477,r G 607 500,r G 607 520,
l R 432 629,l R 432 659,r R 745 628,r R 745 657,r R 745 680,r R 745 697,r R 745 712,u G 666 737,
l G 791 284,l R 822 288,d G 924 280,d G 962 280,d G 990 280,r G 822 629,r G 822 654,l G 1020 618,l G 1020 644,
d R 936 737,d G 1212 316,d G 1242 316,d G 1300 316,l G 1320 362,l R 1394 360,l G 1320 536,
l R 1107 620,l R 1107 645,r G 1107 672,u G 1156 732,d G 1367 496,l R 1367 535,l G 1590 521,
d R 1502 617,d R 1557 619,d G 1367 651,d G 1403 651,d G 1449 651,d G 1502 651,d G 1557 651,
r G 1367 697,r G 1367 712,r G 1213 208,r G 1261 221,r G 1201 238,d R 905 215,d R 945 213,d R 975 218`;

// Labels: x, baseline, text; each | steps down to the next index
const labels = `
480 213 F6P|tis|R,478 235 G6P|tis|R,482 255 Lac|tis|R,485 275 Pyr|tis|R,576 218 A|1,576 235 A|2,576 255 A|10,576 275 A|19,
606 303 t|start,639 304 V,665 304 W,690 290 AMP|free,690 310 ADP|free,695 334 Cytosol,712 359 ADP,714 384 ATP,725 405 Pi,
713 424 CoA,713 444 FAC,702 489 NADH,711 505 NAD,710 532 CO|2,719 554 O|2,727 580 H,719 599 Pyr,696 624 V|CO2|c,705 653 V|O2|c,
712 680 H|cyt,712 700 AMP,714 715 ATP,651 717 J|leak,507 319 Lac|tis|R,505 335 F6P|tis|R,503 350 G6P|tis|R,
616 320 Lac|tis|R,616 335 F6P|tis,616 350 G6P|tis,460 370 FFA,616 370 FFA,461 396 Lac,616 400 Lac,461 415 Ala,616 415 Ala,
463 440 Glc,616 440 Glc,461 460 Glr,616 460 Glr,528 477 A|1,616 477 A|1,528 497 A|2,616 500 A|2,521 517 A|10,616 520 A|10,
441 532 CO|2,441 555 O|2,442 580 H,444 600 Pyr,441 625 V|CO2|c,441 655 V|O2|c,741 279 Pyr|tis|R,831 283 Pyr|tis|R,
831 335 Cytosol,831 355 ADP|c,831 379 ATP|c,831 402 Pi|c,831 420 CoA|c,831 440 FAC|c,831 485 NADH|c,831 505 NAD|c,831 535 CO2|c,
831 555 O2|c,831 577 H|c,831 595 Pyr|c,831 625 V|CO2|c,831 650 V|O2|c,910 298 t|start,959 299 V,985 299 W,
941 335 Mitochondria,975 357 ADP|m,977 375 ATP|m,974 395 CO2|m,976 415 CoA|m,976 440 FAC|m,990 465 H|m,965 490 NADH|m,
974 517 NAD|m,983 540 O2|m,988 560 Pi|m,982 585 Pyr|m,966 614 V|CO2|m,975 640 V|O2|m,921 717 J|leak,
1116 335 Mitochondria,1116 355 ADP,1116 375 ATP,1116 394 CO|2,1116 420 CoA,1116 440 FAC,1116 459 H+,1116 490 NADH,1116 515 NAD,
1116 539 O|2,1116 565 Pi,1116 585 Pyr,1116 620 V|CO2,1116 645 V|O2,1116 671 H|Cyt,1141 712 J|leak,1198 334 t|start,1239 335 V,1295 335 W,
1289 362 A|19,1403 360 A|19,1277 536 Ca|mit,1362 514 W,1377 531 Ca|Calmodulin|1,1493 510 AMPK|2|2|3|active,1471 598 AMPK|initial,
1534 606 CaMKKII,1362 670 W,1380 670 AMP|free,1426 670 ADP|free,1474 670 AMPK|zero,1534 670 CAMKKII,1376 700 AMP,1376 715 ATP,
1223 210 V,1271 220 t|start,1212 240 W,891 195 t|start,942 198 V,970 203 W`;

// Undirected links: x1, y1, x2, y2
const links = [
  [486, 367, 599, 367], [486, 393, 599, 392], [483, 412, 599, 412], [486, 437, 599, 437], [482, 457, 599, 457],
  [472, 532, 707, 532], [463, 555, 716, 555], [456, 577, 724, 577], [466, 596, 716, 596],
  [753, 356, 814, 357], [754, 381, 811, 381], [753, 402, 814, 403], [754, 421, 811, 421], [754, 441, 811, 441],
  [754, 486, 811, 486], [753, 502, 814, 506], [753, 533, 814, 536], [753, 555, 814, 556], [753, 577, 814, 578], [754, 596, 811, 596],
  [1029, 358, 1096, 352], [1029, 376, 1096, 372], [1029, 395, 1096, 395], [1029, 416, 1096, 417], [1029, 441, 1096, 437],
  [1029, 466, 1096, 457], [1029, 491, 1096, 487], [1029, 518, 1096, 512], [1029, 540, 1096, 540], [1029, 561, 1096, 562], [1029, 586, 1096, 582]
];

// Directed links: polylines that end in an arrow head
const arrows = [
  [899, 222, 625, 276], [943, 220, 643, 276], [972, 225, 671, 276],
  [914, 222, 914, 272], [946, 221, 961, 272], [977, 226, 990, 272],
  [910, 222, 1209, 307], [947, 220, 1241, 307], [977, 225, 1299, 307],
  [978, 226, 1365, 487], [978, 226, 1365, 643], [732, 302, 1395, 642], [732, 322, 1440, 642],
  [601, 323, 569, 323], [601, 335, 569, 335], [601, 350, 569, 350], [816, 286, 800, 286],
  [558, 477, 598, 477], [558, 499, 598, 499], [558, 520, 598, 520],
  [695, 628, 483, 628], [704, 658, 474, 658],
  [751, 628, 766, 630, 815, 630], [751, 658, 763, 658, 768, 655, 815, 655],
  [752, 676, 1098, 676], [752, 697, 1358, 697], [752, 712, 1358, 712],
  [1101, 621, 1077, 620, 1073, 619, 1028, 619], [1101, 646, 1077, 645, 1028, 645],
  [1387, 361, 1328, 361], [1361, 536, 1328, 536], [1502, 623, 1502, 643], [1557, 625, 1557, 643],
  [932, 746, 787, 770, 669, 747], [940, 746, 1063, 765, 1153, 743]
];

const out = [];
const turn = { r: 0, d: 90, l: 180, u: 270 };
const fill = { R: '#f00', G: '#0f0' };

for (const [x, y, w, h] of boxes) {
  out.push(`<rect x="${x}" y="${y}" width="${w}" height="${h}" fill="#87cefa" stroke="#111"/>`);
}
for (const [x, ys] of Object.entries(contacts)) {
  for (const y of ys) out.push(`<circle cx="${x}" cy="${y}" r="6" fill="#808080" stroke="#222"/>`);
}
for (const item of ports.split(',')) {
  const [dir, color, x, y] = item.trim().split(' ');
  out.push(`<path d="M-6 -6L6 0L-6 6z" transform="translate(${x} ${y}) rotate(${turn[dir]})" fill="${fill[color]}" stroke="#222"/>`);
}
for (const [x1, y1, x2, y2] of links) {
  const bend = x2 - x1 > 90 ? x1 + 91 : x1 + 8;
  const d = y1 === y2 ? `M${x1} ${y1}H${x2}`
    : `M${x1} ${y1}H${bend}Q${bend + 6} ${y1} ${bend + 7} ${(y1 + y2) / 2}T${bend + 22} ${y2}H${x2}`;
  out.push(`<path d="${d}" fill="none" stroke="#000"/>`);
  out.push(`<circle cx="${x1}" cy="${y1}" r="2"/><circle cx="${x2}" cy="${y2}" r="2"/>`);
}
for (const p of arrows) {
  const n = p.length;
  const angle = Math.atan2(p[n - 1] - p[n - 3], p[n - 2] - p[n - 4]) * 180 / Math.PI;
  out.push(`<polyline points="${p.join(' ')}" fill="none" stroke="#000"/>`);
  out.push(`<path d="M0 0L-12 -6L-7 0L-12 6z" transform="translate(${p[n - 2]} ${p[n - 1]}) rotate(${angle})"/>`);
}
for (const item of labels.split(',')) {
  const [x, y, ...rest] = item.trim().split(' ');
  const parts = rest.join(' ').split('|');
  const spans = parts.slice(1).map(s => `<tspan dx="1" dy="7">${s}</tspan>`).join('');
  out.push(`<text class="node-label" x="${x}" y="${y}">${parts[0]}${spans}</text>`);
}
for (const [x, y, s] of titles) out.push(`<text class="node-title" x="${x}" y="${y}">${s}</text>`);

document.getElementById('diagram').innerHTML = out.join('');
```
